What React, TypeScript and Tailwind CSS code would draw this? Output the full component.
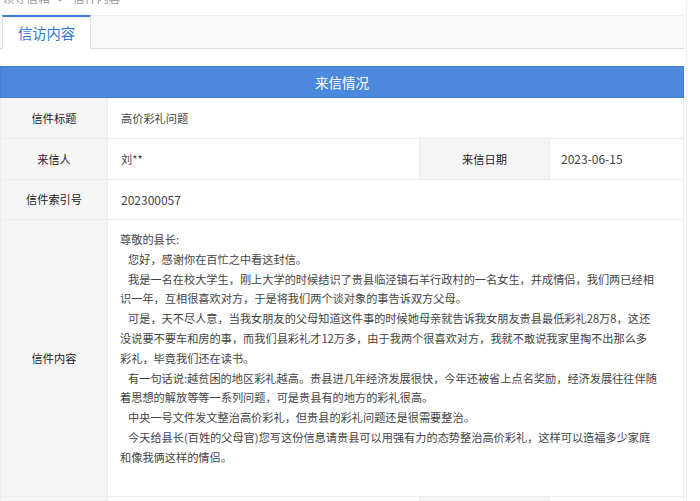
import React from "react";

const font = { fontFamily: '"Noto Sans CJK SC", "Noto Sans", sans-serif' };

export default function App() {
  return (
    <div
      className="relative w-[700px] h-[501px] overflow-hidden bg-white text-[#333]"
      style={font}
    >
      <div className="absolute left-[686px] top-0 h-full w-px bg-[#f0f0f0]" />
      <div className="w-[684px]">
        {/* breadcrumb (cut off) */}
        <div className="h-[15px] overflow-hidden">
          <div className="-mt-[10px] pl-[2px] text-[12px] leading-[16px] text-[#999] flex gap-[8px]">
            <span>领导信箱</span>
            <span>&gt;</span>
            <span>信件内容</span>
          </div>
        </div>

        {/* tab bar */}
        <div className="flex h-[34px] bg-[#f8f8f8] border-t border-[#f0f0f0] border-b border-b-[#dedede]">
          <div className="ml-[2px] w-[89px] -mb-px -mt-px bg-white border-t-2 border-[#3a80dc] border-x border-x-[#e2e2e2] flex items-center justify-center text-[14.3px] text-[#2f78d4]">
            信访内容
          </div>
        </div>

        <div className="h-[17px]" />

        {/* header */}
        <div className="h-[32px] bg-[#4a89dc] border border-[#4080d6] flex items-center justify-center text-white text-[13.5px]">
          来信情况
        </div>

        {/* table */}
        <div className="border-l border-r border-[#ececec] text-[11.2px]">
          <div className="grid grid-cols-[107px_1fr] h-[41px] border-b border-[#ececec]">
            <div className="bg-[#f5f5f5] border-r border-[#ececec] flex items-center justify-center text-[#222]">
              信件标题
            </div>
            <div className="flex items-center pl-[13px] text-[#444]">高价彩礼问题</div>
          </div>

          <div className="grid grid-cols-[107px_312px_130px_1fr] h-[41px] border-b border-[#ececec]">
            <div className="bg-[#f5f5f5] border-r border-[#ececec] flex items-center justify-center text-[#222]">
              来信人
            </div>
            <div className="flex items-center pl-[13px] text-[#444] border-r border-[#ececec]">
              刘**
            </div>
            <div className="bg-[#f5f5f5] border-r border-[#ececec] flex items-center justify-center text-[#222]">
              来信日期
            </div>
            <div className="flex items-center pl-[11px] text-[#444] text-[12px]">2023-06-15</div>
          </div>

          <div className="grid grid-cols-[107px_1fr] h-[40px] border-b border-[#ececec]">
            <div className="bg-[#f5f5f5] border-r border-[#ececec] flex items-center justify-center text-[#222]">
              信件索引号
            </div>
            <div className="flex items-center pl-[13px] text-[#444] text-[12px]">202300057</div>
          </div>

          <div className="grid grid-cols-[107px_1fr] h-[277px] border-b border-[#ececec]">
            <div className="bg-[#f5f5f5] border-r border-[#ececec] flex items-center justify-center text-[#222]">
              信件内容
            </div>
            <div className="pt-[10px] pl-[12px] leading-[19.8px] text-[#444] whitespace-nowrap">
              <p>尊敬的县长:</p>
              <p className="indent-2">您好，感谢你在百忙之中看这封信。</p>
              <p className="indent-2">
                我是一名在校大学生，刚上大学的时候结识了贵县临泾镇石羊行政村的一名女生，并成情侣，我们两已经相
                <br />
                识一年，互相很喜欢对方，于是将我们两个谈对象的事告诉双方父母。
              </p>
              <p className="indent-2">
                可是，天不尽人意，当我女朋友的父母知道这件事的时候她母亲就告诉我女朋友贵县最低彩礼28万8，这还
                <br />
                没说要不要车和房的事，而我们县彩礼才12万多，由于我两个很喜欢对方，我就不敢说我家里掏不出那么多
                <br />
                彩礼，毕竟我们还在读书。
              </p>
              <p className="indent-2">
                有一句话说:越贫困的地区彩礼越高。贵县进几年经济发展很快，今年还被省上点名奖励，经济发展往往伴随
                <br />
                着思想的解放等等一系列问题，可是贵县有的地方的彩礼很高。
              </p>
              <p className="indent-2">中央一号文件发文整治高价彩礼，但贵县的彩礼问题还是很需要整治。</p>
              <p className="indent-2">
                今天给县长(百姓的父母官)您写这份信息请贵县可以用强有力的态势整治高价彩礼，这样可以造福多少家庭
                <br />
                和像我俩这样的情侣。
              </p>
            </div>
          </div>

          <div className="grid grid-cols-[107px_312px_130px_1fr] h-[41px]">
            <div className="bg-[#f5f5f5] border-r border-[#ececec]" />
            <div className="border-r border-[#ececec]" />
            <div className="bg-[#f5f5f5] border-r border-[#ececec]" />
            <div />
          </div>
        </div>
      </div>
    </div>
  );
}
